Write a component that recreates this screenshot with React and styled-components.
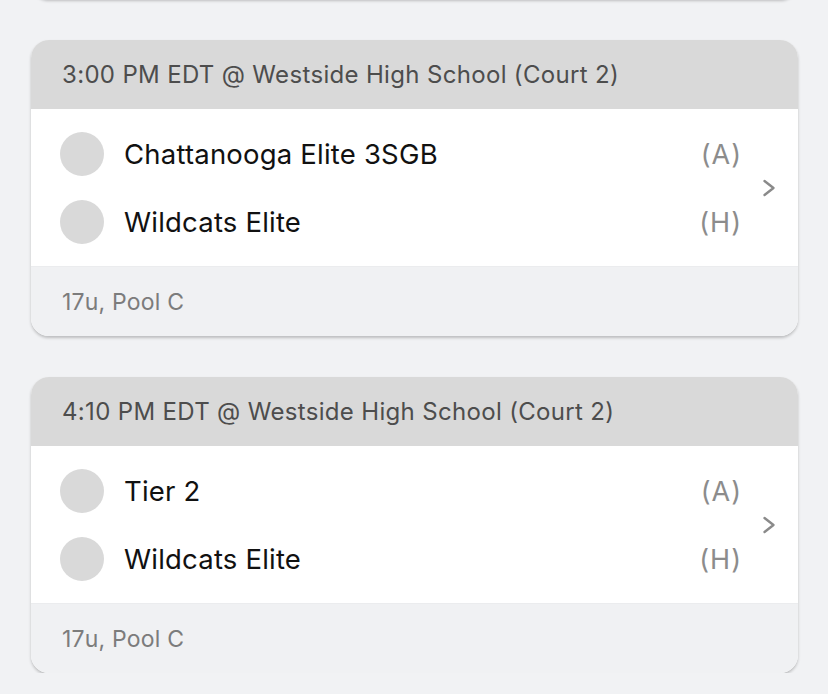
import React from 'react';
import styled, { createGlobalStyle } from 'styled-components';

const games = [
  {
    time: '3:00 PM EDT @ Westside High School (Court 2)',
    home: 'Wildcats Elite',
    away: 'Chattanooga Elite 3SGB',
    division: '17u, Pool C',
  },
  {
    time: '4:10 PM EDT @ Westside High School (Court 2)',
    home: 'Wildcats Elite',
    away: 'Tier 2',
    division: '17u, Pool C',
  },
];

const GlobalStyle = createGlobalStyle`
  html, body {
    margin: 0;
    padding: 0;
    background: #f1f2f4;
    overflow: hidden;
  }
  body {
    font-family: Inter, 'Noto Sans', sans-serif;
  }
`;

const Chevron = () => (
  <svg width="14" height="18" viewBox="0 0 14 18" fill="none">
    <path
      d="M2.5 2 L11.5 9 L2.5 16"
      stroke="#8a8a8a"
      strokeWidth="2.4"
      strokeLinecap="round"
      strokeLinejoin="round"
    />
  </svg>
);

const TeamRow = ({ name, side }) => (
  <Row>
    <Avatar />
    <TeamName>{name}</TeamName>
    <Side>{side}</Side>
  </Row>
);

const GameCard = ({ game }) => (
  <Card>
    <Header>{game.time}</Header>
    <Body>
      <Teams>
        <TeamRow name={game.away} side="(A)" />
        <TeamRow name={game.home} side="(H)" />
      </Teams>
      <Chevron />
    </Body>
    <Footer>{game.division}</Footer>
  </Card>
);

const App = () => (
  <>
    <GlobalStyle />
    <List>
      {/* bottom of the previous game's card, scrolled mostly out of view */}
      <CardEdge />
      {games.map((game) => (
        <GameCard key={game.time} game={game} />
      ))}
    </List>
  </>
);

export default App;

const List = styled.div`
  display: flex;
  flex-direction: column;
  gap: 41px;
  padding: 0 30px 0 31px;
  margin-top: -19px;
`;

const CardEdge = styled.div`
  height: 18px;
  background: #f0f1f3;
  border-radius: 0 0 18px 18px;
  box-shadow: 0 2px 3px rgba(0, 0, 0, 0.22);
`;

const Card = styled.div`
  background: #fff;
  border-radius: 18px;
  overflow: hidden;
  box-shadow: 0 2px 3px rgba(0, 0, 0, 0.22);
`;

const Header = styled.div`
  height: 69px;
  display: flex;
  align-items: center;
  padding: 0 31px;
  background: #d9d9d9;
  color: #4d4d4d;
  font-size: 24px;
  letter-spacing: 0.33px;
  white-space: nowrap;
`;

const Body = styled.div`
  display: flex;
  align-items: center;
  padding: 23px 22px 22px 29px;
  gap: 20px;
`;

const Teams = styled.div`
  flex: 1;
  display: flex;
  flex-direction: column;
  gap: 24px;
`;

const Row = styled.div`
  display: flex;
  align-items: center;
  height: 44px;
`;

const Avatar = styled.div`
  width: 44px;
  height: 44px;
  border-radius: 50%;
  background: #d9d9d9;
  flex-shrink: 0;
  margin-right: 20px;
`;

const TeamName = styled.div`
  flex: 1;
  color: #111;
  font-size: 27.5px;
  letter-spacing: 0.2px;
  white-space: nowrap;
`;

const Side = styled.div`
  color: #8c8c8c;
  font-size: 27px;
  letter-spacing: 1px;
`;

const Footer = styled.div`
  box-sizing: border-box;
  height: 70px;
  display: flex;
  align-items: center;
  padding: 0 31px;
  background: #f0f1f3;
  border-top: 1px solid #ebecee;
  color: #7c7c7c;
  font-size: 23px;
  letter-spacing: 0.2px;
`;
